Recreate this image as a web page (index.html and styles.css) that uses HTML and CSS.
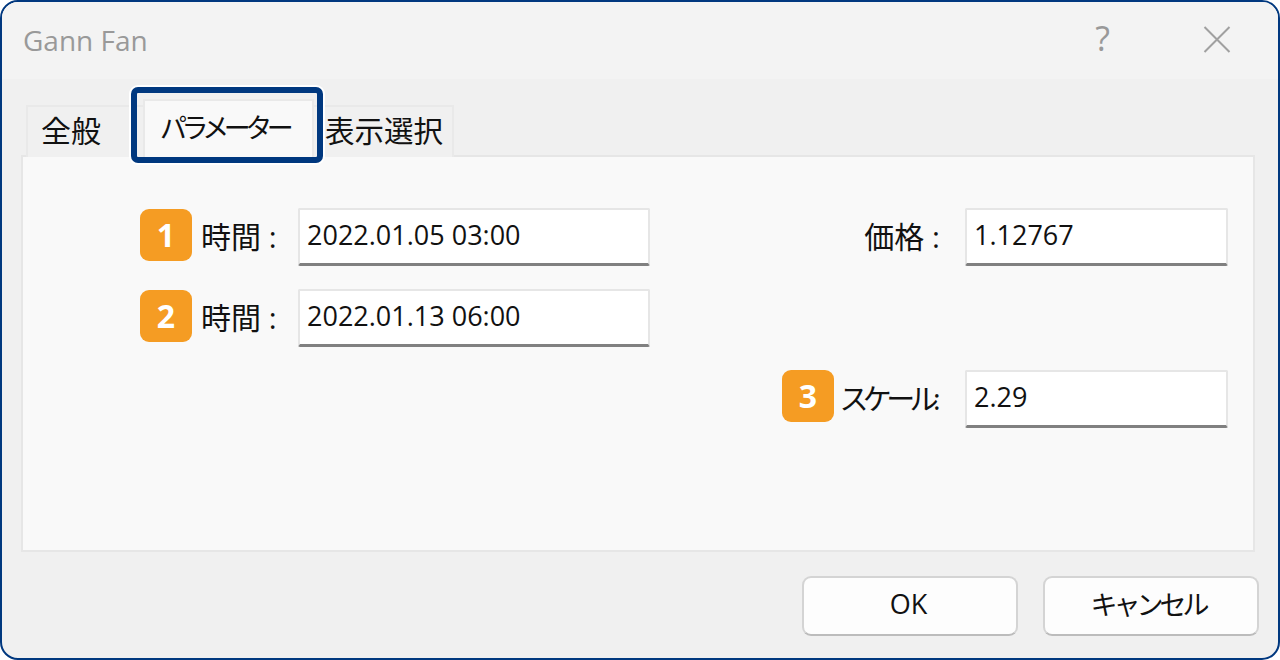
FILE: index.html
```html
<!DOCTYPE html>
<html lang="ja">
<head>
  <meta charset="UTF-8">
  <meta name="viewport" content="width=device-width, initial-scale=1.0">
  <title>Gann Fan</title>
  <link rel="stylesheet" href="styles.css">
</head>
<body>

  <div class="dialog">
    <div class="titlebar">
      <span class="title">Gann Fan</span>
      <span class="help">?</span>
      <svg class="close" width="28" height="27" viewBox="0 0 28 27">
        <path d="M1.5 1 L26.5 26 M26.5 1 L1.5 26" fill="none" stroke="#a0a0a0" stroke-width="2"/>
      </svg>
    </div>

    <div class="tabs">
      <div class="tab tab-first">全般</div>
      <div class="tab tab-active"><span class="kana">パラメーター</span></div>
      <div class="tab tab-last">表示選択</div>
      <div class="tab-highlight"></div>
    </div>

    <div class="panel">
      <div class="field field-left">
        <span class="badge">1</span>
        <label class="field-label" for="time1">時間 :</label>
        <input class="field-input" id="time1" type="text" value="2022.01.05 03:00">
      </div>
      <div class="field field-right">
        <label class="field-label" for="price">価格 :</label>
        <input class="field-input" id="price" type="text" value="1.12767">
      </div>

      <div class="field field-left">
        <span class="badge">2</span>
        <label class="field-label" for="time2">時間 :</label>
        <input class="field-input" id="time2" type="text" value="2022.01.13 06:00">
      </div>
      <div class="field-empty"></div>

      <div class="field-empty"></div>
      <div class="field field-right">
        <span class="badge">3</span>
        <label class="field-label" for="scale"><span class="kana">スケール:</span></label>
        <input class="field-input" id="scale" type="text" value="2.29">
      </div>
    </div>

    <div class="buttons">
      <button class="btn btn-ok">OK</button>
      <button class="btn"><span class="kana">キャンセル</span></button>
    </div>
  </div>

</body>
</html>
```

FILE: styles.css
```css
body {
  margin: 0;
  background-color: #fff;
  font-family: "Open Sans", "Noto Sans CJK JP", sans-serif;
  color: #111;
}
.dialog {
  box-sizing: border-box;
  width: 1280px;
  height: 660px;
  border: 2px solid #00387f;
  border-radius: 18px;
  background-color: #f0f0f0;
  overflow: hidden;
}
.titlebar {
  display: flex;
  align-items: center;
  height: 77px;
  padding: 0 47px 0 21px;
  background-color: #f3f3f3;
}
.title {
  flex: 1;
  padding-bottom: 2px;
  font-size: 28px;
  color: #999;
}
.help {
  margin-right: 93px;
  padding-bottom: 5px;
  font-size: 34px;
  color: #999;
}
.close {
  display: block;
  margin-bottom: 3px;
}

.tabs {
  position: relative;
  z-index: 1;
  display: flex;
  align-items: flex-end;
  height: 78px;
  margin-bottom: -2px;
  padding-left: 24px;
}
.tab {
  box-sizing: border-box;
  height: 52px;
  padding: 1px 0 0 13px;
  border: 2px solid #e9e9e9;
  border-bottom: none;
  background-color: #f0f0f0;
  font-size: 30px;
  line-height: 46px;
}
.tab-first {
  width: 117px;
  border-right: none;
}
.tab-active {
  width: 171px;
  height: 58px;
  padding: 2px 0 0 15px;
  background-color: #f9f9f9;
  font-size: 27px;
  line-height: 50px;
}
.tab-active .kana {
  letter-spacing: -5.5px;
}
.tab-last {
  width: 140px;
  padding-left: 11px;
  border-left: none;
  font-size: 29.5px;
}
.tab-highlight {
  position: absolute;
  left: 129px;
  top: 8px;
  box-sizing: border-box;
  width: 192px;
  height: 76px;
  border: 6px solid #00387f;
  border-radius: 7px;
  box-shadow: 0 0 0 2px #fff;
}

.panel {
  box-sizing: border-box;
  display: grid;
  grid-template-columns: 510px 446px;
  grid-auto-rows: 58px;
  row-gap: 23px;
  justify-content: space-between;
  height: 397px;
  margin: 0 23px 0 19px;
  padding: 51px 25px 0 117px;
  border: 2px solid #e6e6e6;
  background-color: #f9f9f9;
}
.field {
  display: flex;
  align-items: center;
}
.field-right {
  justify-content: flex-end;
}
.badge {
  flex: none;
  width: 52px;
  height: 52px;
  margin-bottom: 4px;
  border-radius: 9px;
  background-color: #f59c23;
  color: #fff;
  font-size: 32px;
  font-weight: 700;
  line-height: 52px;
  text-align: center;
}
.field-right .badge {
  margin-bottom: 6px;
}
.field-label {
  flex: 1;
  box-sizing: border-box;
  padding-bottom: 4px;
  font-size: 30px;
  white-space: nowrap;
}
.field-label .kana {
  margin-right: 5px;
  font-size: 29px;
  letter-spacing: -5.6px;
}
.field-left .field-label {
  padding-left: 9px;
}
.field-right .field-label {
  padding-right: 25px;
  text-align: right;
}
.field-input {
  box-sizing: border-box;
  height: 58px;
  padding: 0 7px 4px;
  border: 2px solid #e6e6e6;
  border-bottom: 3px solid #808080;
  border-radius: 2px;
  background-color: #fff;
  color: #111;
  font-family: "Open Sans", sans-serif;
  font-size: 27px;
  outline: none;
}
.field-left .field-input {
  width: 352px;
}
.field-right .field-input {
  width: 263px;
}

.buttons {
  display: flex;
  justify-content: flex-end;
  gap: 25px;
  padding: 24px 19px 0 0;
}
.btn {
  box-sizing: border-box;
  width: 216px;
  height: 60px;
  padding: 0 0 5px;
  border: 2px solid #d4d4d4;
  border-bottom-color: #bcbcbc;
  border-radius: 9px;
  background-color: #fdfdfd;
  color: #111;
  font-family: "Open Sans", "Noto Sans CJK JP", sans-serif;
  font-size: 27px;
}
.btn-ok {
  padding-right: 3px;
}
.btn .kana {
  margin-right: 6px;
  letter-spacing: -4px;
}
```
